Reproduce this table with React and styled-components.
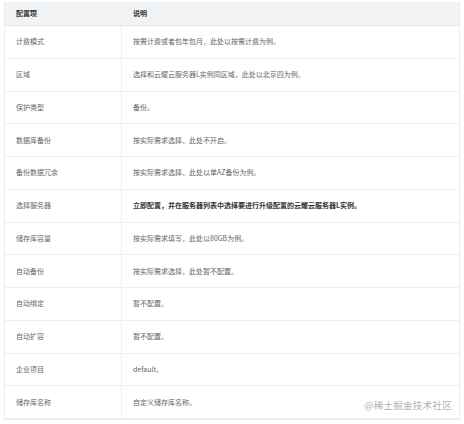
import React from "react";
import styled, { createGlobalStyle } from "styled-components";

const Global = createGlobalStyle`
  html, body { margin: 0; padding: 0; background: #ffffff; }
  body { font-family: "Noto Sans CJK SC", "Noto Sans", sans-serif; }
`;

const Page = styled.div`
  position: relative;
  width: 464px;
  height: 424px;
  padding: 2px 4px 0 4px;
  box-sizing: border-box;
  background: #fff;
`;

const Table = styled.div`
  width: 456px;
  border: 1px solid #ececec;
  border-top: none;
  box-sizing: border-box;
  display: grid;
  grid-template-columns: 117px 1fr;
`;

const Cell = styled.div`
  height: ${(p) => (p.$head ? "24px" : "32.75px")};
  box-sizing: border-box;
  display: flex;
  align-items: center;
  padding-left: ${(p) => (p.$first ? "11px" : "11px")};
  background: ${(p) => (p.$head ? "#f2f3f5" : "#ffffff")};
  border-bottom: 1px solid ${(p) => (p.$head ? "#e4e6ea" : "#eeeeee")};
  border-right: ${(p) => (p.$first ? "1px solid #eeeeee" : "none")};
  font-size: 7px;
  line-height: 1;
  white-space: nowrap;
  color: ${(p) => (p.$head ? "#333" : p.$bold ? "#333" : "#666")};
  font-weight: ${(p) => (p.$head || p.$bold ? 700 : 400)};
`;

const Watermark = styled.div`
  position: absolute;
  right: 12px;
  bottom: 12px;
  font-size: 9.6px;
  color: #b0b0b0;
  font-family: "Noto Sans CJK SC", sans-serif;
  letter-spacing: 0.2px;
`;

const rows = [
  ["计费模式", "按需计费或者包年包月，此处以按需计费为例。"],
  ["区域", "选择和云耀云服务器L实例同区域，此处以北京四为例。"],
  ["保护类型", "备份。"],
  ["数据库备份", "按实际需求选择，此处不开启。"],
  ["备份数据冗余", "按实际需求选择，此处以单AZ备份为例。"],
  ["选择服务器", "立即配置，并在服务器列表中选择要进行升级配置的云耀云服务器L实例。", true],
  ["储存库容量", "按实际需求填写，此处以80GB为例。"],
  ["自动备份", "按实际需求选择，此处暂不配置。"],
  ["自动绑定", "暂不配置。"],
  ["自动扩容", "暂不配置。"],
  ["企业项目", "default。"],
  ["储存库名称", "自定义储存库名称。"],
];

export default function App() {
  return (
    <>
      <Global />
      <Page>
        <Table>
          <Cell $head $first>配置项</Cell>
          <Cell $head>说明</Cell>
          {rows.map(([k, v, b]) => (
            <React.Fragment key={k}>
              <Cell $first>{k}</Cell>
              <Cell $bold={b}>{v}</Cell>
            </React.Fragment>
          ))}
        </Table>
        <Watermark>@稀土掘金技术社区</Watermark>
      </Page>
    </>
  );
}
